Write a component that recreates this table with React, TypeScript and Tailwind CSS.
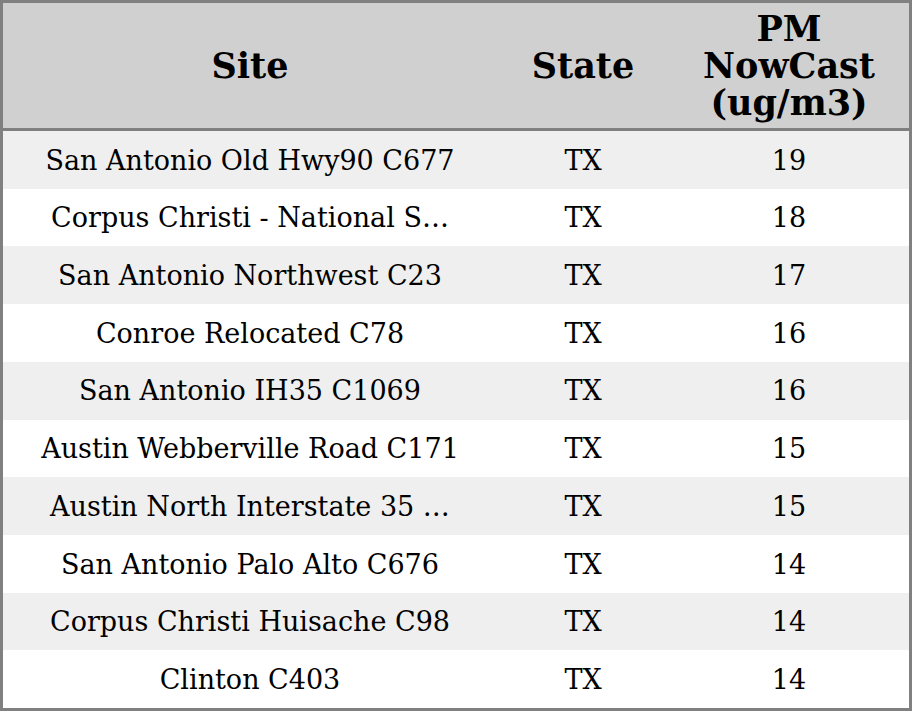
import React from "react";

const rows: [string, string, string][] = [
  ["San Antonio Old Hwy90 C677", "TX", "19"],
  ["Corpus Christi - National S…", "TX", "18"],
  ["San Antonio Northwest C23", "TX", "17"],
  ["Conroe Relocated C78", "TX", "16"],
  ["San Antonio IH35 C1069", "TX", "16"],
  ["Austin Webberville Road C171", "TX", "15"],
  ["Austin North Interstate 35 …", "TX", "15"],
  ["San Antonio Palo Alto C676", "TX", "14"],
  ["Corpus Christi Huisache C98", "TX", "14"],
  ["Clinton C403", "TX", "14"],
];

export default function App() {
  return (
    <div className="w-[912px] h-[711px] bg-white border-[3px] border-[#808080] flex flex-col text-black [font-family:'DejaVu_Serif',serif]">
      <div className="h-[128px] shrink-0 bg-[#d0d0d0] border-b-[3px] border-[#808080] grid grid-cols-[494px_172px_1fr] items-center text-center font-bold text-[35px] leading-[37px]">
        <div>Site</div>
        <div>State</div>
        <div>PM<br />NowCast<br />(ug/m3)</div>
      </div>
      <div className="flex-1 flex flex-col">
        {rows.map((r, i) => (
          <div
            key={i}
            className={`flex-1 grid grid-cols-[494px_172px_1fr] items-center text-center text-[27px] pt-[2px] ${i % 2 === 0 ? "bg-[#efefef]" : "bg-white"}`}
          >
            <div className="whitespace-nowrap">{r[0]}</div>
            <div>{r[1]}</div>
            <div>{r[2]}</div>
          </div>
        ))}
      </div>
    </div>
  );
}
